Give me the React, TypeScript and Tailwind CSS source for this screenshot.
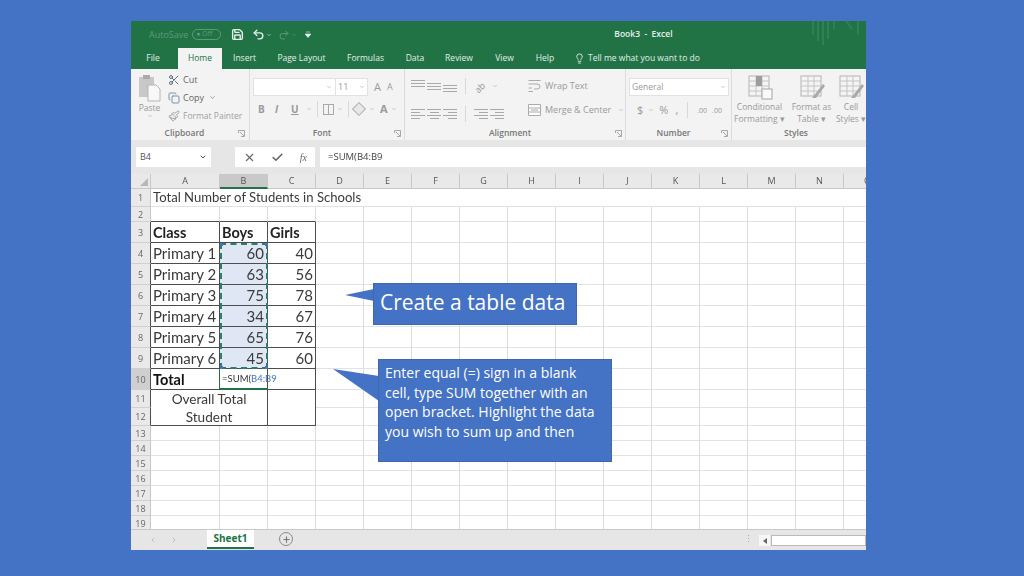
import { Save, Undo2, Redo2, Lightbulb, X, Check, Scissors, Copy, Paintbrush, ChevronDown, Plus, ChevronLeft, ChevronRight } from 'lucide-react';
import clsx from 'clsx';

const tabs = [
  { label: 'File', w: 'w-[47px] pr-[3px]' },
  { label: 'Home', w: 'w-[44px]', active: true },
  { label: 'Insert', w: 'w-[45px]' },
  { label: 'Page Layout', w: 'w-[69px]' },
  { label: 'Formulas', w: 'w-[59px]' },
  { label: 'Data', w: 'w-[40px]' },
  { label: 'Review', w: 'w-[48px]' },
  { label: 'View', w: 'w-[43px]' },
  { label: 'Help', w: 'w-[38px]' },
];

const columns = ['A', 'B', 'C', 'D', 'E', 'F', 'G', 'H', 'I', 'J', 'K', 'L', 'M', 'N', 'O'];
const rowNumbers = Array.from({ length: 19 }, (_, i) => i + 1);

const students: Record<number, [string, string, string]> = {
  4: ['Primary 1', '60', '40'],
  5: ['Primary 2', '63', '56'],
  6: ['Primary 3', '75', '78'],
  7: ['Primary 4', '34', '67'],
  8: ['Primary 5', '65', '76'],
  9: ['Primary 6', '45', '60'],
};

function Lines({ align }: { align: 'left' | 'center' | 'right' }) {
  return (
    <div
      className={clsx(
        'flex w-[14px] flex-col gap-[2px]',
        align === 'left' && 'items-start',
        align === 'center' && 'items-center',
        align === 'right' && 'items-end'
      )}
    >
      <span className="h-px w-[14px] bg-[#a9a9a9]" />
      <span className="h-px w-[9px] bg-[#a9a9a9]" />
      <span className="h-px w-[14px] bg-[#a9a9a9]" />
      <span className="h-px w-[9px] bg-[#a9a9a9]" />
    </div>
  );
}

function VAlign({ pos }: { pos: 'top' | 'middle' | 'bottom' }) {
  return (
    <div
      className={clsx(
        'flex h-[12px] w-[14px] flex-col gap-[2px]',
        pos === 'top' && 'justify-start',
        pos === 'middle' && 'justify-center',
        pos === 'bottom' && 'justify-end'
      )}
    >
      <span className="h-px w-[14px] bg-[#a9a9a9]" />
      <span className="h-px w-[14px] bg-[#a9a9a9]" />
      <span className="h-px w-[14px] bg-[#a9a9a9]" />
    </div>
  );
}

function Launcher() {
  return (
    <svg width="7" height="7" viewBox="0 0 7 7" className="text-[#a8a8a8]">
      <path d="M.5 3V.5H6.5M6.5.5V6.5H3M2 2 6 6" fill="none" stroke="currentColor" />
    </svg>
  );
}

function GroupLabel({ text, launcher, className }: { text: string; launcher?: boolean; className?: string }) {
  return (
    <div className={clsx('flex h-[14px] items-center', className)}>
      <span className="flex-1 text-center text-[8.5px] font-semibold text-[#777]">{text}</span>
      {launcher && <Launcher />}
    </div>
  );
}

function TableIcon({ brush }: { brush?: boolean }) {
  return (
    <svg width="28" height="26" viewBox="0 0 28 26">
      <rect x="3" y="2" width="20" height="20" fill="#f4f4f4" stroke="#b4b4b4" />
      <path d="M3 7H23M3 12H23M3 17H23M10 2V22M16 2V22" stroke="#c4c4c4" />
      {brush ? (
        <path d="M14 24 25 10l2 2-9 12z" fill="#a9a9a9" />
      ) : (
        <>
          <rect x="10" y="2" width="6" height="10" fill="#9d9d9d" />
          <rect x="16" y="15" width="10" height="10" fill="#fafafa" stroke="#a5a5a5" />
        </>
      )}
    </svg>
  );
}

function Ribbon() {
  return (
    <div className="flex h-[71px] bg-[#f3f3f3] text-[#9a9a9a]">
      <div className="flex w-[119px] flex-col border-r border-[#dcdcdc] pr-[4px]">
        <div className="flex h-[57px]">
          <div className="flex w-[37px] flex-col items-center pt-[5px]">
            <svg width="24" height="28" viewBox="0 0 24 28">
              <rect x="1" y="3" width="15" height="20" fill="#c8c8c8" />
              <rect x="5" y="1" width="7" height="4" fill="#aaa" />
              <path d="M10 11h8l4 4v12H10z" fill="#f8f8f8" stroke="#b5b5b5" />
            </svg>
            <span className="mt-[1px] text-[8.5px] leading-[10px] text-[#999]">Paste</span>
            <ChevronDown size={6} />
          </div>
          <div className="flex flex-col gap-[5px] pt-[4px] text-[9px] leading-[13px]">
            <div className="flex items-center gap-[3px] whitespace-nowrap text-[#666]">
              <Scissors size={12} className="text-[#607080]" />
              Cut
            </div>
            <div className="flex items-center gap-[3px] whitespace-nowrap text-[#666]">
              <Copy size={12} className="text-[#7c93ad]" />
              Copy
              <ChevronDown size={7} className="ml-[2px]" />
            </div>
            <div className="flex items-center gap-[3px] whitespace-nowrap text-[8.5px] text-[#a0a0a0]">
              <Paintbrush size={12} />
              Format Painter
            </div>
          </div>
        </div>
        <GroupLabel text="Clipboard" launcher />
      </div>

      <div className="flex w-[155px] flex-col border-r border-[#dcdcdc] pr-[3px]">
        <div className="flex h-[57px] flex-col">
          <div className="flex items-center pl-[3px] pt-[9px]">
            <div className="flex h-[18px] w-[83px] items-center justify-end border border-[#e2e2e2] bg-white pr-[3px]">
              <ChevronDown size={6} />
            </div>
            <div className="flex h-[18px] w-[32px] items-center justify-between border border-l-0 border-[#e2e2e2] bg-white px-[2px] text-[9px]">
              11
              <ChevronDown size={6} />
            </div>
            <span className="ml-[6px] text-[11px]">A</span>
            <span className="ml-[6px] text-[9px]">A</span>
          </div>
          <div className="flex items-center pl-[8px] pt-[5px] text-[10px] font-bold">
            <span className="w-[17px]">B</span>
            <span className="w-[16px] italic">I</span>
            <span className="w-[15px] underline">U</span>
            <ChevronDown size={6} />
            <span className="mx-[5px] h-[16px] w-px bg-[#d8d8d8]" />
            <span className="h-[11px] w-[11px] border border-[#a9a9a9] bg-[linear-gradient(#a9a9a9,#a9a9a9)] bg-[length:1px_100%] bg-center bg-no-repeat" />
            <ChevronDown size={6} className="ml-[3px]" />
            <span className="mx-[5px] h-[16px] w-px bg-[#d8d8d8]" />
            <span className="h-[10px] w-[10px] rotate-45 border border-[#b0b0b0] bg-[#e8e8e8]" />
            <ChevronDown size={6} className="ml-[5px]" />
            <span className="ml-[5px] text-[11px]">A</span>
            <ChevronDown size={6} className="ml-[3px]" />
          </div>
        </div>
        <GroupLabel text="Font" launcher />
      </div>

      <div className="flex w-[221px] flex-col border-r border-[#dcdcdc] pr-[3px]">
        <div className="flex h-[57px]">
          <div className="flex flex-col gap-[12px] pl-[6px] pt-[9px]">
            <div className="flex items-center gap-[2px]">
              <VAlign pos="top" />
              <VAlign pos="middle" />
              <VAlign pos="bottom" />
              <span className="mx-[6px] h-[16px] w-px bg-[#d8d8d8]" />
              <span className="w-[16px] -rotate-45 text-[9px] leading-[10px]">ab</span>
              <ChevronDown size={6} />
            </div>
            <div className="flex items-center gap-[2px]">
              <Lines align="left" />
              <Lines align="center" />
              <Lines align="right" />
              <span className="mx-[6px] h-[16px] w-px bg-[#d8d8d8]" />
              <Lines align="right" />
              <Lines align="right" />
            </div>
          </div>
          <span className="ml-[20px] mt-[7px] h-[40px] w-px bg-[#d8d8d8]" />
          <div className="flex flex-col gap-[10px] pl-[4px] pt-[10px] text-[9px] leading-[14px]">
            <div className="flex items-center gap-[4px] whitespace-nowrap">
              <svg width="13" height="12" viewBox="0 0 13 12">
                <path d="M.5.5H12.5M.5 4H9q3 0 3 2.5T9 9H6M.5 8H4M.5 11.5H5" fill="none" stroke="#aaa" />
              </svg>
              Wrap Text
            </div>
            <div className="flex items-center gap-[4px] whitespace-nowrap">
              <svg width="13" height="12" viewBox="0 0 13 12">
                <path d="M.5.5H12.5V11.5H.5ZM.5 4H12.5M.5 8H12.5M3 6H10" fill="#fff" stroke="#aaa" />
              </svg>
              Merge &amp; Center
              <ChevronDown size={6} className="ml-[3px]" />
            </div>
          </div>
        </div>
        <GroupLabel text="Alignment" launcher />
      </div>

      <div className="flex w-[106px] flex-col border-r border-[#dcdcdc] pr-[3px]">
        <div className="flex h-[57px] flex-col pl-[3px] pt-[9px]">
          <div className="flex h-[18px] w-[100px] items-center justify-between border border-[#e2e2e2] bg-white px-[2px] text-[8.5px]">
            General
            <ChevronDown size={6} />
          </div>
          <div className="flex items-center gap-[5px] pl-[8px] pt-[6px] text-[11px]">
            <span>$</span>
            <ChevronDown size={6} />
            <span>%</span>
            <span className="ml-[2px]">,</span>
            <span className="mx-[4px] h-[16px] w-px bg-[#d8d8d8]" />
            <span className="text-[7px] leading-[7px]">.00</span>
            <span className="text-[7px] leading-[7px]">.00</span>
          </div>
        </div>
        <GroupLabel text="Number" launcher />
      </div>

      <div className="flex flex-1 flex-col">
        <div className="flex h-[57px] text-center text-[8.5px] leading-[12px]">
          <div className="flex w-[55px] flex-col items-center pt-[5px]">
            <TableIcon />
            <span className="mt-[1px] whitespace-nowrap">Conditional</span>
            <span className="whitespace-nowrap">Formatting ▾</span>
          </div>
          <div className="flex w-[49px] flex-col items-center pt-[5px]">
            <TableIcon brush />
            <span className="mt-[1px] whitespace-nowrap">Format as</span>
            <span className="whitespace-nowrap">Table ▾</span>
          </div>
          <div className="flex w-[30px] flex-col items-center pt-[5px]">
            <TableIcon brush />
            <span className="mt-[1px] whitespace-nowrap">Cell</span>
            <span className="whitespace-nowrap">Styles ▾</span>
          </div>
        </div>
        <GroupLabel text="Styles" className="pr-[6px]" />
      </div>
    </div>
  );
}

function FormulaBar() {
  return (
    <div className="flex h-[34px] items-start bg-[#e6e6e6] pt-[7px]">
      <div className="ml-[5px] flex h-[20px] w-[75px] items-center justify-between bg-white px-[4px] text-[9px] text-[#555]">
        B4
        <ChevronDown size={8} strokeWidth={3} />
      </div>
      <div className="ml-[24px] flex h-[20px] w-[80px] items-center justify-between bg-white px-[8px] text-[#666]">
        <X size={13} />
        <Check size={13} strokeWidth={3} />
        <span className="font-['Liberation_Serif',serif] text-[10px] italic">fx</span>
      </div>
      <div className="ml-[5px] flex h-[20px] flex-1 items-center bg-white pl-[8px] text-[9.5px] text-[#444]">=SUM(B4:B9</div>
    </div>
  );
}

function Cell({ row, col }: { row: number; col: number }) {
  const inTable = row >= 3 && row <= 12 && col <= 2;
  const borderBottom = (row >= 2 && row <= 10 && col <= 2) || (row === 12 && col <= 2);
  const borderRight = inTable && !(row >= 11 && col === 0);
  const highlighted = col === 1 && row >= 4 && row <= 9;

  let content: string | null = null;
  if (row === 3 && col <= 2) content = ['Class', 'Boys', 'Girls'][col];
  if (students[row] && col <= 2) content = students[row][col];
  const bold = row === 3;

  return (
    <div
      className={clsx(
        'flex min-w-0 items-center whitespace-nowrap border-b border-r pl-[2px] pt-px',
        borderBottom ? 'border-b-[#4d4d4d]' : 'border-b-[#e2e2e2]',
        borderRight ? 'border-r-[#4d4d4d]' : 'border-r-[#dcdcdc]',
        highlighted && 'bg-[#dfe7f5]',
        bold ? 'text-[14.5px] font-bold text-[#222]' : 'text-[15px]',
        col > 0 && row > 3 && 'justify-end',
        col === 1 ? 'pr-[3px]' : 'pr-[2px]'
      )}
    >
      {content}
    </div>
  );
}

function Sheet() {
  const cells = [];
  for (const row of rowNumbers) {
    cells.push(
      <div
        key={`h${row}`}
        className={clsx(
          'flex items-center justify-center border-b border-b-[#d0d0d0] pt-px font-["Open_Sans",sans-serif] text-[9px] text-[#666]',
          row >= 3 && row <= 12 ? 'border-r border-r-[#4d4d4d]' : 'border-r border-r-[#c8c8c8]',
          row === 10 ? 'bg-[#cfcfcf]' : 'bg-[#e9e9e9]'
        )}
      >
        {row}
      </div>
    );
    if (row === 1) {
      cells.push(
        <div key="title" className="col-span-15 flex items-center whitespace-nowrap border-b border-b-[#e2e2e2] px-[2px] pt-px text-[13.1px]">
          Total Number of Students in Schools
        </div>
      );
      continue;
    }
    if (row === 10) {
      cells.push(
        <div key="total" className="flex items-center border-b border-r border-b-[#4d4d4d] border-r-[#217346] px-[2px] pt-px text-[14.5px] font-bold text-[#111]">
          Total
        </div>,
        <div key="active" className="relative flex items-center whitespace-nowrap border-b-2 border-r border-b-[#217346] border-r-[#4d4d4d] pl-[2px] pt-[2px] text-[9.5px] text-[#333]">
          =SUM(<span className="text-[#4472c4]">B4:B9</span>
          <span className="ml-px h-[11px] w-px bg-[#444]" />
        </div>,
        <div key="c10" className="border-b border-r border-b-[#4d4d4d] border-r-[#4d4d4d]" />
      );
      for (let col = 3; col < 15; col++) cells.push(<Cell key={`${row}-${col}`} row={row} col={col} />);
      continue;
    }
    if (row === 11) {
      cells.push(
        <div key="overall" className="col-span-2 row-span-2 flex items-center justify-center border-b border-r border-b-[#4d4d4d] border-r-[#4d4d4d] text-center text-[13.6px] leading-[18px]">
          Overall Total
          <br />
          Student
        </div>,
        <div key="c11" className="row-span-2 border-b border-r border-b-[#4d4d4d] border-r-[#4d4d4d]" />
      );
      for (let col = 3; col < 15; col++) cells.push(<Cell key={`${row}-${col}`} row={row} col={col} />);
      continue;
    }
    const start = row === 12 ? 3 : 0;
    for (let col = start; col < 15; col++) cells.push(<Cell key={`${row}-${col}`} row={row} col={col} />);
  }

  return (
    <div className="relative flex-1 overflow-hidden bg-white font-['Lato',sans-serif] text-[14px] text-[#3a3a3a]">
      <div className="grid grid-cols-[20px_69px_48px_48px_48px_48px_48px_48px_48px_48px_48px_48px_48px_48px_48px_48px] grid-rows-[15px_18px_15px_21px_21px_21px_21px_21px_21px_21px_21px_18px_18px_15px_15px_15px_15px_15px_15px_15px]">
        <div className="relative border-b border-r border-[#c8c8c8] bg-[#e9e9e9]">
          <span className="absolute bottom-[2px] right-[2px] h-0 w-0 border-b-[8px] border-l-[8px] border-b-[#b8b8b8] border-l-transparent" />
        </div>
        {columns.map((c) => (
          <div
            key={c}
            className={clsx(
              'flex items-center justify-center border-r border-r-[#c8c8c8] font-["Open_Sans",sans-serif] text-[9px] text-[#555]',
              c === 'B' ? 'border-b-2 border-b-[#217346] bg-[#c9c9c9]' : 'border-b border-b-[#c8c8c8] bg-[#e9e9e9]'
            )}
          >
            {c}
          </div>
        ))}
        {cells}
      </div>

      {/* marching ants round B4:B9 */}
      <div className="absolute left-[89px] top-[69px] h-[126px] w-[48px] border-2 border-dashed border-[#2f7d68]">
        <span className="absolute -left-[2px] -top-[2px] h-[3px] w-[3px] bg-[#4472c4]" />
        <span className="absolute -right-[2px] -top-[2px] h-[3px] w-[3px] bg-[#4472c4]" />
        <span className="absolute -bottom-[2px] -left-[2px] h-[3px] w-[3px] bg-[#4472c4]" />
        <span className="absolute -bottom-[2px] -right-[2px] h-[3px] w-[3px] bg-[#4472c4]" />
      </div>

      <svg className="absolute left-[214px] top-[109px]" width="30" height="22" viewBox="0 0 30 22">
        <polygon points="0,12 29,6 29,18" fill="#4472c4" />
      </svg>
      <div className="absolute left-[242px] top-[109px] flex h-[42px] w-[204px] items-center border border-[#3f66ae] bg-[#4472c4] pb-[3px] pl-[6px] font-['Open_Sans',sans-serif] text-[21px] text-white">
        Create a table data
      </div>

      <svg className="absolute left-[202px] top-[195px]" width="46" height="34" viewBox="0 0 46 34">
        <polygon points="0,0 46,7 46,32" fill="#4472c4" />
      </svg>
      <div className="absolute left-[247px] top-[185px] h-[103px] w-[234px] border border-[#3f66ae] bg-[#4472c4] pl-[6px] pt-[3px] font-['Open_Sans',sans-serif] text-[14px] leading-[19.5px] text-white">
        Enter equal (=) sign in a blank
        <br />
        cell, type SUM together with an
        <br />
        open bracket. Highlight the data
        <br />
        you wish to sum up and then
      </div>
    </div>
  );
}

function SheetTabs() {
  return (
    <div className="flex h-[21px] items-start border-t border-[#c8c8c8] bg-[#e6e6e6] text-[#aaa]">
      <ChevronLeft size={8} className="ml-[18px] mt-[6px]" />
      <ChevronRight size={8} className="ml-[13px] mt-[6px]" />
      <div className="ml-[29px] flex h-[19px] w-[47px] items-center justify-center border-b-2 border-[#217346] bg-white text-[10px] font-bold text-[#217346]">
        Sheet1
      </div>
      <div className="ml-[25px] mt-[2px] flex h-[14px] w-[14px] items-center justify-center rounded-full border border-[#888] text-[#777]">
        <Plus size={9} strokeWidth={3} />
      </div>
      <span className="ml-[451px] mt-[3px] text-[9px] leading-[12px]">⋮</span>
      <div className="ml-[6px] mt-[5px] flex h-[11px] w-[11px] items-center justify-center bg-[#f7f7f7] text-[#666]">
        <span className="h-0 w-0 border-y-[3px] border-r-[4px] border-y-transparent border-r-[#666]" />
      </div>
      <div className="ml-px mt-[5px] h-[11px] flex-1 border border-[#bbb] bg-white" />
    </div>
  );
}

export default function App() {
  return (
    <div className="h-[576px] w-[1024px] overflow-hidden bg-[#4472c4] pl-[131px] pt-[21px] font-['Open_Sans',sans-serif]">
      <div className="flex h-[529px] w-[735px] flex-col overflow-hidden blur-[0.4px]">
        <div className="relative flex h-[27px] items-center bg-[#217346] text-[#e8f1ec]">
          <span className="ml-[18px] text-[9px] text-[#5d9a7c]">AutoSave</span>
          <span className="ml-[4px] flex h-[11px] w-[29px] items-center rounded-full border border-[#5d9a7c] pl-[3px] text-[7px] text-[#5d9a7c]">
            ● Off
          </span>
          <Save size={13} strokeWidth={2.5} className="ml-[10px]" />
          <Undo2 size={13} strokeWidth={2.5} className="ml-[8px]" />
          <ChevronDown size={6} className="ml-[1px]" />
          <Redo2 size={12} className="ml-[6px] text-[#5d9a7c]" />
          <ChevronDown size={6} className="ml-[1px] text-[#5d9a7c]" />
          <svg width="6" height="7" viewBox="0 0 6 7" className="ml-[8px]">
            <path d="M1 1H5M0 3H6L3 6.5Z" stroke="currentColor" fill="currentColor" strokeWidth=".6" />
          </svg>
          <span className="ml-[303px] whitespace-nowrap text-[8.5px] font-semibold">Book3&nbsp; - &nbsp;Excel</span>
          <svg className="absolute right-[4px] top-0 text-[#2f8055]" width="52" height="26" viewBox="0 0 52 26">
            <path d="M3 0V14M8 0V20M13 0V24M18 0V18M24 0V8M36 0 42 8M48 0V14" stroke="currentColor" strokeWidth="2" />
          </svg>
        </div>

        <div className="flex h-[21px] items-stretch bg-[#217346] text-[8.5px] text-[#e2eee8]">
          {tabs.map((t) => (
            <div
              key={t.label}
              className={clsx(
                'flex items-center justify-center',
                t.w,
                t.active && 'bg-[#f3f3f3] text-[#217346]'
              )}
            >
              {t.label}
            </div>
          ))}
          <div className="ml-[10px] flex items-center gap-[3px] whitespace-nowrap">
            <Lightbulb size={11} />
            Tell me what you want to do
          </div>
        </div>

        <Ribbon />
        <FormulaBar />
        <Sheet />
        <SheetTabs />
      </div>
    </div>
  );
}
